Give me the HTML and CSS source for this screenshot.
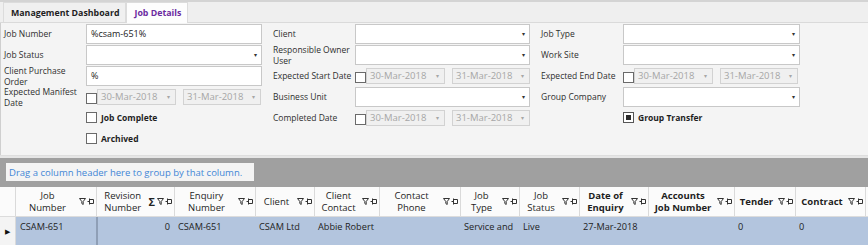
FILE: index.html
```html
<!DOCTYPE html>
<html lang="en">
<head>
  <meta charset="UTF-8">
  <title>Job Details</title>
  <link rel="stylesheet" href="styles.css">
</head>
<body>
  <div class="tabs">
    <div class="tab">Management Dashboard</div>
    <div class="tab active">Job Details</div>
  </div>

  <div class="filters">
    <!-- row 1 -->
    <div class="label">Job Number</div>
    <div class="field"><div class="text-input">%csam-651%</div></div>
    <div class="spacer"></div>
    <div class="label">Client</div>
    <div class="field"><div class="combo"><span class="arrow">&#9662;</span></div></div>
    <div class="spacer"></div>
    <div class="label">Job Type</div>
    <div class="field"><div class="combo"><span class="arrow">&#9662;</span></div></div>

    <!-- row 2 -->
    <div class="label">Job Status</div>
    <div class="field"><div class="combo"><span class="arrow">&#9662;</span></div></div>
    <div class="spacer"></div>
    <div class="label">Responsible Owner User</div>
    <div class="field"><div class="combo"><span class="arrow">&#9662;</span></div></div>
    <div class="spacer"></div>
    <div class="label">Work Site</div>
    <div class="field"><div class="combo"><span class="arrow">&#9662;</span></div></div>

    <!-- row 3 -->
    <div class="label">Client Purchase Order</div>
    <div class="field"><div class="text-input">%</div></div>
    <div class="spacer"></div>
    <div class="label nowrap">Expected Start Date</div>
    <div class="field dates">
      <span class="check"></span>
      <div class="date">30-Mar-2018<span class="arrow">&#9662;</span></div>
      <div class="date">31-Mar-2018<span class="arrow">&#9662;</span></div>
    </div>
    <div class="spacer"></div>
    <div class="label nowrap">Expected End Date</div>
    <div class="field dates">
      <span class="check"></span>
      <div class="date">30-Mar-2018<span class="arrow">&#9662;</span></div>
      <div class="date">31-Mar-2018<span class="arrow">&#9662;</span></div>
    </div>

    <!-- row 4 -->
    <div class="label">Expected Manifest Date</div>
    <div class="field dates">
      <span class="check"></span>
      <div class="date">30-Mar-2018<span class="arrow">&#9662;</span></div>
      <div class="date">31-Mar-2018<span class="arrow">&#9662;</span></div>
    </div>
    <div class="spacer"></div>
    <div class="label">Business Unit</div>
    <div class="field"><div class="combo"><span class="arrow">&#9662;</span></div></div>
    <div class="spacer"></div>
    <div class="label">Group Company</div>
    <div class="field"><div class="combo"><span class="arrow">&#9662;</span></div></div>

    <!-- row 5 -->
    <div class="label"></div>
    <div class="field"><label class="checkbox"><span class="check"></span>Job Complete</label></div>
    <div class="spacer"></div>
    <div class="label">Completed Date</div>
    <div class="field dates">
      <span class="check"></span>
      <div class="date">30-Mar-2018<span class="arrow">&#9662;</span></div>
      <div class="date">31-Mar-2018<span class="arrow">&#9662;</span></div>
    </div>
    <div class="spacer"></div>
    <div class="label"></div>
    <div class="field"><label class="checkbox"><span class="check checked"></span>Group Transfer</label></div>

    <!-- row 6 -->
    <div class="label"></div>
    <div class="field"><label class="checkbox"><span class="check"></span>Archived</label></div>
  </div>

  <div class="grid">
    <div class="group-panel">
      <div class="group-hint">Drag a column header here to group by that column.</div>
    </div>

    <div class="grid-row header">
      <div class="cell indicator"></div>
      <div class="cell w-job"><span class="head-text">Job<br>Number</span><span class="icons"><svg class="funnel" viewBox="0 0 7 7"><path d="M0.5 0.5h6l-2.3 3v3l-1.4-1v-2z"/></svg><svg class="pin" viewBox="0 0 7 7"><path d="M0.5 3.5h2M2.5 0.5v6M2.5 1.5h4v4h-4"/></svg></span></div>
      <div class="cell w-rev"><span class="head-text">Revision<br>Number</span><span class="icons"><span class="sigma">&Sigma;</span><svg class="funnel" viewBox="0 0 7 7"><path d="M0.5 0.5h6l-2.3 3v3l-1.4-1v-2z"/></svg><svg class="pin" viewBox="0 0 7 7"><path d="M0.5 3.5h2M2.5 0.5v6M2.5 1.5h4v4h-4"/></svg></span></div>
      <div class="cell w-enq"><span class="head-text">Enquiry<br>Number</span><span class="icons"><svg class="funnel" viewBox="0 0 7 7"><path d="M0.5 0.5h6l-2.3 3v3l-1.4-1v-2z"/></svg><svg class="pin" viewBox="0 0 7 7"><path d="M0.5 3.5h2M2.5 0.5v6M2.5 1.5h4v4h-4"/></svg></span></div>
      <div class="cell w-client"><span class="head-text">Client</span><span class="icons"><svg class="funnel" viewBox="0 0 7 7"><path d="M0.5 0.5h6l-2.3 3v3l-1.4-1v-2z"/></svg><svg class="pin" viewBox="0 0 7 7"><path d="M0.5 3.5h2M2.5 0.5v6M2.5 1.5h4v4h-4"/></svg></span></div>
      <div class="cell w-contact"><span class="head-text">Client<br>Contact</span><span class="icons"><svg class="funnel" viewBox="0 0 7 7"><path d="M0.5 0.5h6l-2.3 3v3l-1.4-1v-2z"/></svg><svg class="pin" viewBox="0 0 7 7"><path d="M0.5 3.5h2M2.5 0.5v6M2.5 1.5h4v4h-4"/></svg></span></div>
      <div class="cell w-phone"><span class="head-text">Contact<br>Phone</span><span class="icons"><svg class="funnel" viewBox="0 0 7 7"><path d="M0.5 0.5h6l-2.3 3v3l-1.4-1v-2z"/></svg><svg class="pin" viewBox="0 0 7 7"><path d="M0.5 3.5h2M2.5 0.5v6M2.5 1.5h4v4h-4"/></svg></span></div>
      <div class="cell w-type"><span class="head-text">Job<br>Type</span><span class="icons"><svg class="funnel" viewBox="0 0 7 7"><path d="M0.5 0.5h6l-2.3 3v3l-1.4-1v-2z"/></svg><svg class="pin" viewBox="0 0 7 7"><path d="M0.5 3.5h2M2.5 0.5v6M2.5 1.5h4v4h-4"/></svg></span></div>
      <div class="cell w-status"><span class="head-text">Job<br>Status</span><span class="icons"><svg class="funnel" viewBox="0 0 7 7"><path d="M0.5 0.5h6l-2.3 3v3l-1.4-1v-2z"/></svg><svg class="pin" viewBox="0 0 7 7"><path d="M0.5 3.5h2M2.5 0.5v6M2.5 1.5h4v4h-4"/></svg></span></div>
      <div class="cell w-date bold"><span class="head-text">Date of<br>Enquiry</span><span class="icons"><svg class="funnel" viewBox="0 0 7 7"><path d="M0.5 0.5h6l-2.3 3v3l-1.4-1v-2z"/></svg><svg class="pin" viewBox="0 0 7 7"><path d="M0.5 3.5h2M2.5 0.5v6M2.5 1.5h4v4h-4"/></svg></span></div>
      <div class="cell w-acc bold"><span class="head-text">Accounts<br>Job Number</span><span class="icons"><svg class="funnel" viewBox="0 0 7 7"><path d="M0.5 0.5h6l-2.3 3v3l-1.4-1v-2z"/></svg><svg class="pin" viewBox="0 0 7 7"><path d="M0.5 3.5h2M2.5 0.5v6M2.5 1.5h4v4h-4"/></svg></span></div>
      <div class="cell w-tender bold"><span class="head-text">Tender</span><span class="icons"><svg class="funnel" viewBox="0 0 7 7"><path d="M0.5 0.5h6l-2.3 3v3l-1.4-1v-2z"/></svg><svg class="pin" viewBox="0 0 7 7"><path d="M0.5 3.5h2M2.5 0.5v6M2.5 1.5h4v4h-4"/></svg></span></div>
      <div class="cell w-contract bold"><span class="head-text">Contract</span><span class="icons"><svg class="funnel" viewBox="0 0 7 7"><path d="M0.5 0.5h6l-2.3 3v3l-1.4-1v-2z"/></svg><svg class="pin" viewBox="0 0 7 7"><path d="M0.5 3.5h2M2.5 0.5v6M2.5 1.5h4v4h-4"/></svg></span></div>
    </div>

    <div class="grid-row data">
      <div class="cell indicator"><span class="current">&#9654;</span></div>
      <div class="cell w-job">CSAM-651</div>
      <div class="cell w-rev num">0</div>
      <div class="cell w-enq">CSAM-651</div>
      <div class="cell w-client">CSAM Ltd</div>
      <div class="cell w-contact">Abbie Robert</div>
      <div class="cell w-phone"></div>
      <div class="cell w-type">Service and</div>
      <div class="cell w-status">Live</div>
      <div class="cell w-date">27-Mar-2018</div>
      <div class="cell w-acc"></div>
      <div class="cell w-tender">0</div>
      <div class="cell w-contract">0</div>
    </div>
  </div>
</body>
</html>
```

FILE: styles.css
```css
* {
  margin: 0;
  padding: 0;
  box-sizing: border-box;
}

body {
  width: 868px;
  height: 245px;
  overflow: hidden;
  background: #f4f4f4;
  font-family: 'Open Sans', 'Noto Sans', sans-serif;
  font-size: 8.5px;
  color: #333;
}

/* tab strip */

.tabs {
  height: 23px;
  display: flex;
  align-items: flex-end;
  padding-left: 3px;
  background: #efefef;
  border-top: 2px solid #d4d4d4;
  border-bottom: 1px solid #dadada;
}

.tab {
  height: 20px;
  padding: 0 6px 0 7px;
  display: flex;
  align-items: center;
  font-weight: 700;
  font-size: 8.8px;
  color: #1e1e1e;
  border: 1px solid #dcdcdc;
  border-bottom: none;
  background: #f0f0f0;
}

.tab.active {
  height: 21px;
  margin-bottom: -1px;
  background: #fdfdfd;
  color: #6b2aa0;
}

/* filter form */

.filters {
  display: grid;
  grid-template-columns: 82px 176px 11px 82px 175px 11px 82px 177px;
  grid-auto-rows: 21px;
  padding: 0 0 0 3px;
  border-left: 1px solid #cfcfcf;
  height: 132px;
}

.label {
  display: flex;
  align-items: center;
  line-height: 11px;
  color: #2e2e2e;
  padding-right: 2px;
}

.label.nowrap {
  white-space: nowrap;
  padding-right: 0;
}

.field {
  display: flex;
  align-items: center;
}

.text-input,
.combo {
  position: relative;
  width: 100%;
  height: 20px;
  background: #fff;
  border: 1px solid #c8c8c8;
  padding: 0 4px;
  display: flex;
  align-items: center;
  font-size: 9px;
  color: #222;
}

.combo .arrow {
  position: absolute;
  right: 4px;
  top: 5px;
  font-size: 6px;
  color: #333;
}

.check {
  display: inline-block;
  width: 11px;
  height: 11px;
  border: 1px solid #6a6a6a;
  background: #fff;
  flex: none;
}

.check.checked {
  border-color: #555;
  padding: 2px;
}

.check.checked::after {
  content: '';
  display: block;
  width: 100%;
  height: 100%;
  background: #2a2a2a;
}

.dates .check {
  margin-top: 4px;
}

.date {
  position: relative;
  width: 79px;
  height: 16px;
  margin-right: 7px;
  background: #f0f0f0;
  border: 1px solid #d2d2d2;
  padding-left: 3px;
  display: flex;
  align-items: center;
  font-size: 9.5px;
  color: #a6a6a6;
}

.date:last-child {
  margin-right: 0;
  width: 78px;
}

.date .arrow {
  position: absolute;
  right: 5px;
  top: 3px;
  font-size: 6px;
  color: #a6a6a6;
}

.checkbox {
  display: flex;
  align-items: center;
  gap: 4px;
  font-weight: 700;
  color: #1e1e1e;
}

/* grid */

.grid {
  border-top: 1px solid #dedede;
}

.group-panel {
  height: 31px;
  background: #a0a0a0;
  padding: 5px 0 0 6px;
  border-top: 2px solid #e6e6e6;
}

.group-hint {
  width: 248px;
  height: 18px;
  background: #f4f4f4;
  padding-left: 3px;
  display: flex;
  align-items: center;
  font-size: 9.5px;
  color: #3f86d6;
}

.grid-row {
  display: flex;
}

.cell {
  flex: none;
  border-right: 1px solid #dadada;
}

.indicator { width: 16px; }
.w-job { width: 81px; }
.w-rev { width: 78px; }
.w-enq { width: 81px; }
.w-client { width: 59px; }
.w-contact { width: 65px; }
.w-phone { width: 81px; }
.w-type { width: 59px; }
.w-status { width: 60px; }
.w-date { width: 69px; }
.w-acc { width: 86px; }
.w-tender { width: 61px; }
.w-contract { width: 70px; }

.header {
  height: 30px;
  background: #fbfbfb;
  border-bottom: 1px solid #dcdcdc;
}

.header .cell {
  display: flex;
  align-items: center;
  padding-right: 2px;
  font-size: 9.5px;
  color: #1e1e1e;
}

.header .cell.bold {
  font-weight: 700;
}

.head-text {
  flex: 1;
  text-align: center;
  line-height: 11.5px;
}

.icons {
  display: flex;
  align-items: center;
  gap: 1px;
}

.funnel,
.pin {
  width: 7px;
  height: 7px;
  fill: none;
  stroke: #333;
  stroke-width: 1;
}

.sigma {
  font-size: 11px;
  font-weight: 700;
  color: #222;
  margin-right: 1px;
}

.data {
  height: 30px;
  background: #b3c5de;
}

.data .cell {
  padding: 3px 4px 0;
  border-right: none;
  font-size: 9.2px;
  color: #222;
}

.data .indicator {
  background: #f4f4f4;
  border-right: 1px solid #dadada;
  padding: 11px 0 0 5px;
}

.current {
  display: block;
  line-height: 8px;
  font-size: 7px;
  color: #111;
}

.data .w-rev {
  border-left: 2px solid #8f9fb6;
  text-align: right;
}

.data .w-job {
  width: 80px;
}
```
